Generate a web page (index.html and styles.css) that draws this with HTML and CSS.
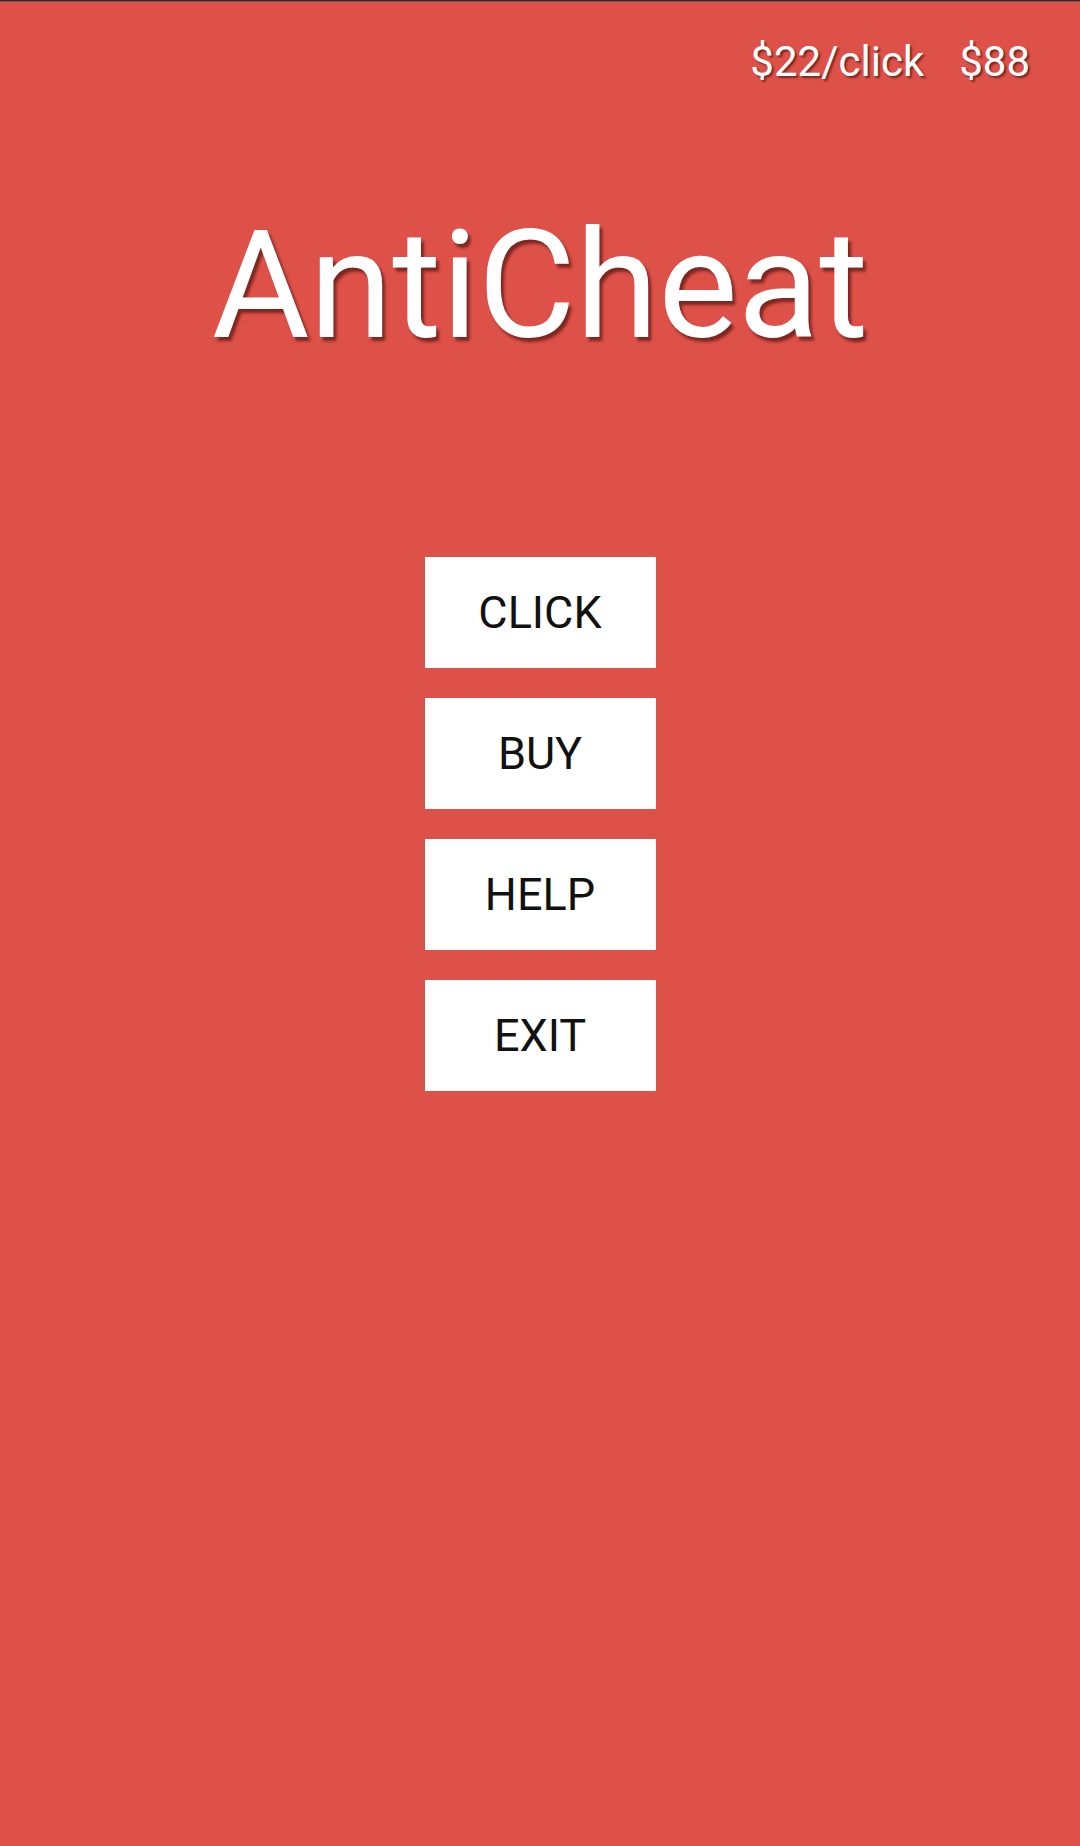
FILE: index.html
```html
<!DOCTYPE html>
<html lang="en">
<head>
<meta charset="utf-8">
<title>AntiCheat</title>
<link rel="stylesheet" href="styles.css">
</head>
<body>
<div class="screen">
  <header class="stats">
    <span class="stat">$22/click</span>
    <span class="stat">$88</span>
  </header>
  <h1 class="title">AntiCheat</h1>
  <nav class="menu">
    <button class="btn">CLICK</button>
    <button class="btn">BUY</button>
    <button class="btn">HELP</button>
    <button class="btn">EXIT</button>
  </nav>
</div>
</body>
</html>
```

FILE: styles.css
```css
html, body {
  margin: 0;
  padding: 0;
}
body {
  width: 1080px;
  height: 1846px;
  background: linear-gradient(#2e2a29 0, #2e2a29 1px, #8c4a44 1px, #8c4a44 2px, #de5148 2px);
  font-family: Roboto, "Noto Sans", "Liberation Sans", sans-serif;
  overflow: hidden;
}
.screen {
  display: flex;
  flex-direction: column;
  align-items: center;
}
.stats {
  align-self: stretch;
  display: flex;
  justify-content: flex-end;
  gap: 35px;
  padding: 38px 50px 0 0;
}
.stat {
  color: #ffffff;
  font-size: 42px;
  line-height: 48px;
  text-shadow: 2px 2px 2px rgba(60, 10, 5, 0.6);
}
.title {
  margin: 125px 0 0 0;
  color: #ffffff;
  font-size: 150px;
  font-weight: 400;
  line-height: 150px;
  text-shadow: 3px 4px 3px rgba(60, 10, 5, 0.6);
}
.menu {
  display: flex;
  flex-direction: column;
  gap: 30px;
  margin-top: 196px;
}
.btn {
  width: 231px;
  height: 111px;
  border: none;
  border-radius: 0;
  background: #ffffff;
  color: #111111;
  font-family: Roboto, "Noto Sans", "Liberation Sans", sans-serif;
  font-size: 45px;
  padding: 0;
  margin: 0;
  display: flex;
  align-items: center;
  justify-content: center;
}
```
